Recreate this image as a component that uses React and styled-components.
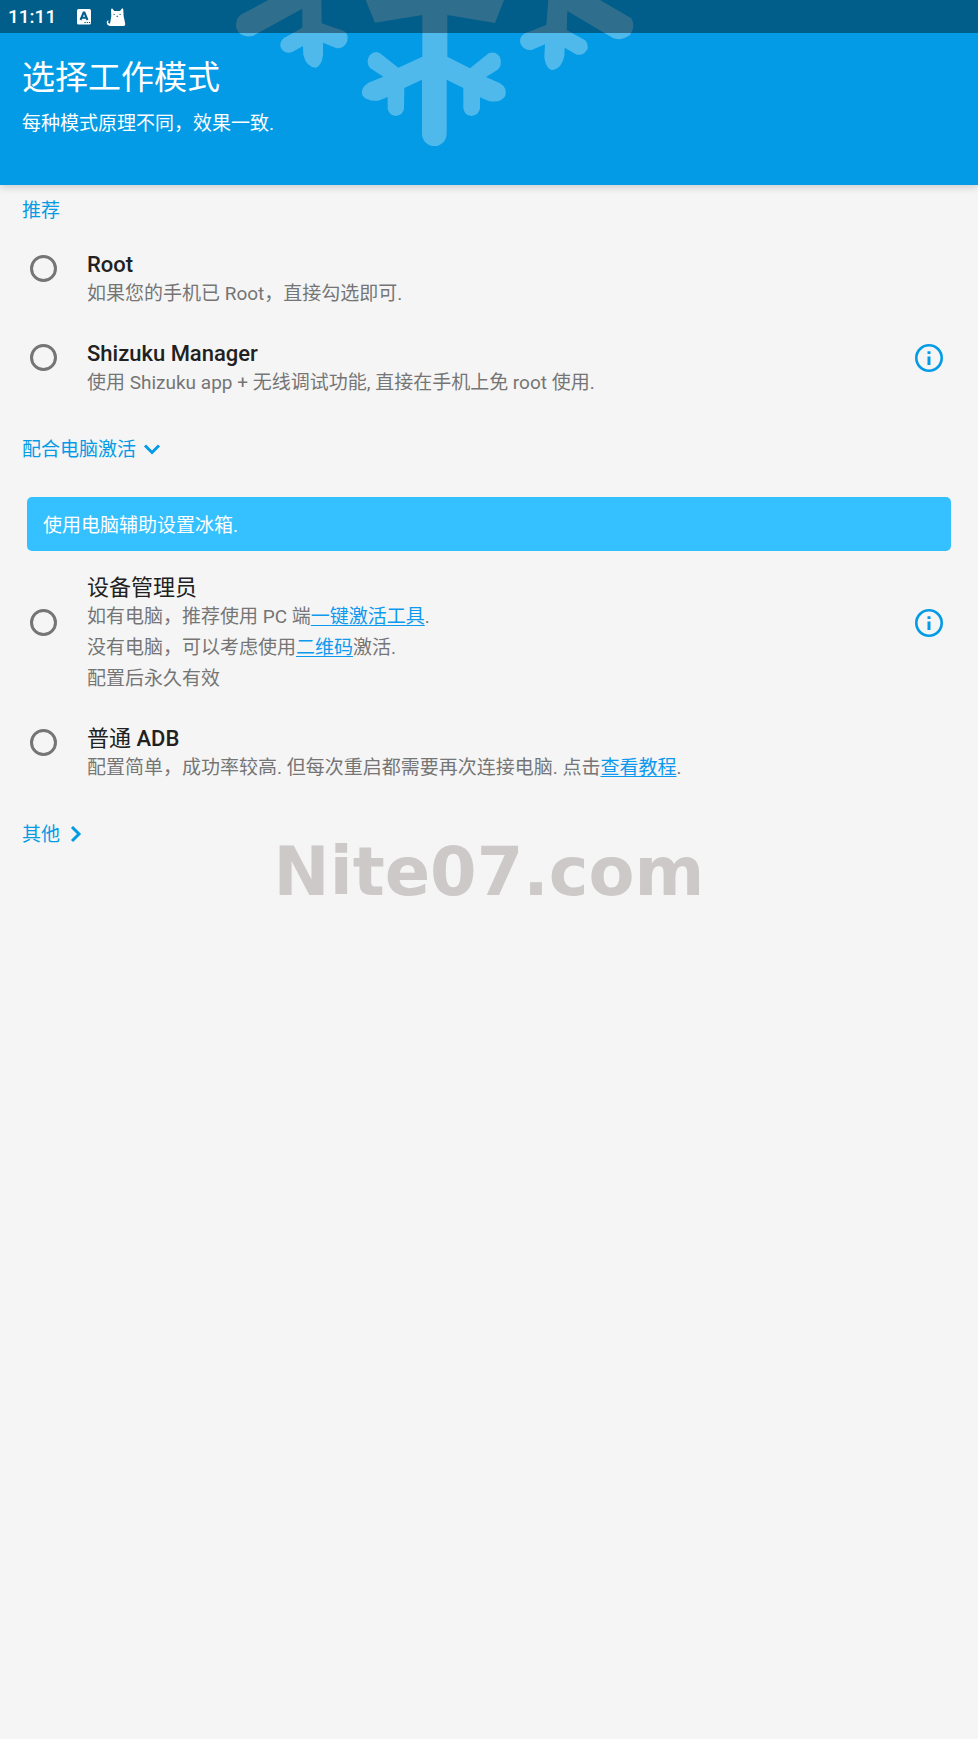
import React, { useState } from "react";
import styled, { createGlobalStyle } from "styled-components";

const GlobalStyle = createGlobalStyle`
  * { box-sizing: border-box; }
  body {
    margin: 0;
    background: #f5f5f5;
    color: #757575;
    font-family: Roboto, "Noto Sans CJK SC", sans-serif;
    font-size: 19px;
    line-height: 31px;
  }
`;

const Page = styled.div`
  min-height: 100vh;
  padding-bottom: 32px;
`;

const Header = styled.header`
  position: relative;
  overflow: hidden;
  background: #039be5;
  color: #fff;
`;

const HeaderShadow = styled.div`
  box-shadow: 0 2px 8px rgba(0, 0, 0, 0.18);
`;

const Snowflake = styled.svg`
  position: absolute;
  top: 0;
  left: 220px;
  width: 430px;
  height: 150px;
  fill: #fff;
  opacity: 0.3;
`;

const StatusBar = styled.div`
  position: relative;
  display: flex;
  align-items: center;
  height: 33px;
  padding: 0 8px;
  background: rgba(0, 0, 0, 0.4);
  font-weight: 500;
`;

const StatusIcons = styled.div`
  display: flex;
  align-items: center;
  gap: 14px;
  margin-left: 20px;

  svg { display: block; }
`;

const HeaderText = styled.div`
  position: relative;
  padding: 22px 22px 46px;
`;

const Title = styled.h1`
  margin: 0 0 8px;
  font-size: 33px;
  line-height: 45px;
  font-weight: 400;
`;

const Subtitle = styled.p`
  margin: 0;
`;

const SectionLabel = styled.h2`
  margin: 0;
  padding: 10px 22px 2px;
  font-size: 19px;
  font-weight: 400;
  color: #039be5;
`;

const SectionToggle = styled.button`
  display: flex;
  align-items: center;
  gap: 7px;
  margin: 36px 22px 32px;
  padding: 0;
  border: 0;
  background: none;
  color: #039be5;
  font: inherit;
  cursor: pointer;
`;

const Banner = styled.p`
  margin: 0 27px;
  padding: 13px 16px 10px;
  border-radius: 5px;
  background: #35c0ff;
  color: #fff;
`;

const Options = styled.div`
  display: flex;
  flex-direction: column;
  gap: 8px;
`;

const Option = styled.div`
  display: flex;
  align-items: center;
  padding: 0 35px 0 30px;
`;

const Radio = styled.input`
  appearance: none;
  flex: none;
  width: 27px;
  height: 27px;
  margin: 0 30px 0 0;
  border: 3px solid #757575;
  border-radius: 50%;
  cursor: pointer;

  &:checked {
    border-color: #039be5;
    background: radial-gradient(#039be5 50%, transparent 55%);
  }
`;

const OptionText = styled.div`
  flex: 1;
  padding-top: 24px;
`;

const OptionTitle = styled.label`
  display: block;
  font-size: 22px;
  line-height: 26px;
  font-weight: 500;
  color: #212121;
`;

const Ideographs = styled.span`
  font-weight: 400;
`;

const OptionNote = styled.p`
  margin: 0;
`;

const Link = styled.a`
  color: #0d99ee;
  text-decoration: underline;
  text-underline-offset: 2px;
`;

const InfoButton = styled.button`
  display: block;
  width: 28px;
  height: 28px;
  padding: 0;
  border: 0;
  background: none;
  color: #039be5;
  cursor: pointer;

  svg { display: block; }
`;

const Watermark = styled.div`
  position: fixed;
  inset: 0;
  display: flex;
  align-items: center;
  justify-content: center;
  padding-top: 4px;
  color: #cdc9c9;
  font: 700 67px/80px "DejaVu Sans", sans-serif;
  pointer-events: none;
`;

function InfoIcon() {
  return (
    <svg width="28" height="28" viewBox="0 0 28 28" fill="none" stroke="currentColor">
      <circle cx="14" cy="14" r="12.7" strokeWidth="2.6" />
      <path d="M14 12.6v8.4M14 7.2v2.9" strokeWidth="3" />
    </svg>
  );
}

function Chevron({ open }) {
  return (
    <svg width="18" height="18" viewBox="0 0 18 18" fill="none" stroke="currentColor" strokeWidth="3">
      <path d={open ? "M2 4.500l7 7 7-7" : "M5 1l7 7-7 7"} />
    </svg>
  );
}

function Choice({ id, title, info, value, onChange, children }) {
  return (
    <Option>
      <Radio type="radio" name="mode" id={id} checked={value === id} onChange={() => onChange(id)} />
      <OptionText>
        <OptionTitle htmlFor={id}>{title}</OptionTitle>
        {children}
      </OptionText>
      {info && (
        <InfoButton type="button" aria-label="Info">
          <InfoIcon />
        </InfoButton>
      )}
    </Option>
  );
}

export default function App() {
  const [mode, setMode] = useState("");
  const [pcOpen, setPcOpen] = useState(true);
  const shared = { value: mode, onChange: setMode };

  return (
    <Page lang="zh-CN">
      <GlobalStyle />
      <HeaderShadow>
        <Header>
          <Snowflake viewBox="0 0 1290 450" aria-hidden="true">
            <path d="M437 0L465 68L607 45V170L535 203L482 161Q465 149 449 166Q436 188 450 204L490 230L445 248Q420 265 427 286Q440 305 475 302L503 291V325Q506 347 528 348Q550 345 552 325L553 264L606 239V401A37 37 0 0 0 680 401V239L730 264V325Q733 347 755 348Q777 345 780 325V292L806 303Q842 310 856 288Q862 263 840 250L798 231L832 210Q848 197 840 172Q828 152 806 160L750 205L682 170V45L825 69L852 0Z" />
            <path d="M145 0L65 43Q45 55 49 85Q60 115 98 108L247 26V83L192 114Q175 128 184 146Q197 163 217 156L249 138L250 165Q260 203 288 203Q306 195 309 165V128L348 144Q370 148 381 125Q388 100 370 92L305 70L304 0Z" />
            <path d="M985 0L979 75L915 100Q895 112 902 132Q912 152 935 150L975 133L973 170Q978 210 1000 210Q1025 205 1033 168L1034 143L1070 164Q1092 168 1103 146Q1105 125 1090 118L1040 90L1042 33L1180 115Q1205 123 1230 105Q1248 80 1234 55L1140 0Z" />
          </Snowflake>
          <StatusBar>
            <span>11:11</span>
            <StatusIcons>
              <svg width="16" height="17" viewBox="0 0 16 17" aria-hidden="true">
                <rect x="1" y="1" width="14" height="15.500" rx="1.500" fill="#fff" />
                <path d="M4.500 12L7.600 4.500h.8L11.500 12M5.500 9.700h5" fill="none" stroke="#005f8b" strokeWidth="2" />
                <path d="M8.500 14.500h6" stroke="#005f8b" strokeWidth="1.200" strokeDasharray="1.300 .9" />
              </svg>
              <svg width="20" height="20" viewBox="0 0 20 20" aria-hidden="true">
                <path d="M5 2.500L6 1.300L8.300 4H14L16.300 1L17.300 2.500L17.600 9L19.300 17Q19.500 19 17.500 19H4Q1 18.500 .7 15.500Q.6 13.500 2.300 13.200L2.500 14.400Q1.800 15 2.300 16L4 16.800L5.300 9Z" fill="#fff" />
                <path d="M7.500 7.400h1.200M13.500 7.400h1.200M10.500 9.300h1.600" stroke="#005f8b" strokeWidth="1" />
              </svg>
            </StatusIcons>
          </StatusBar>
          <HeaderText>
            <Title>选择工作模式</Title>
            <Subtitle>每种模式原理不同，效果一致.</Subtitle>
          </HeaderText>
        </Header>
      </HeaderShadow>

      <main>
        <SectionLabel>推荐</SectionLabel>
        <Options>
          <Choice id="root" title="Root" {...shared}>
            <OptionNote>如果您的手机已 Root，直接勾选即可.</OptionNote>
          </Choice>
          <Choice id="shizuku" title="Shizuku Manager" info {...shared}>
            <OptionNote>使用 Shizuku app + 无线调试功能, 直接在手机上免 root 使用.</OptionNote>
          </Choice>
        </Options>

        <SectionToggle type="button" aria-expanded={pcOpen} onClick={() => setPcOpen(!pcOpen)}>
          配合电脑激活
          <Chevron open={pcOpen} />
        </SectionToggle>
        {pcOpen && (
          <>
            <Banner>使用电脑辅助设置冰箱.</Banner>
            <Options>
              <Choice id="admin" title={<Ideographs>设备管理员</Ideographs>} info {...shared}>
                <OptionNote>
                  如有电脑，推荐使用 PC 端<Link href="#tool">一键激活工具</Link>.
                </OptionNote>
                <OptionNote>
                  没有电脑，可以考虑使用<Link href="#qrcode">二维码</Link>激活.
                </OptionNote>
                <OptionNote>配置后永久有效</OptionNote>
              </Choice>
              <Choice id="adb" title={<><Ideographs>普通</Ideographs> ADB</>} {...shared}>
                <OptionNote>
                  配置简单，成功率较高. 但每次重启都需要再次连接电脑. 点击<Link href="#guide">查看教程</Link>.
                </OptionNote>
              </Choice>
            </Options>
          </>
        )}

        <SectionToggle type="button" aria-expanded="false">
          其他
          <Chevron />
        </SectionToggle>
      </main>

      <Watermark>Nite07.com</Watermark>
    </Page>
  );
}
